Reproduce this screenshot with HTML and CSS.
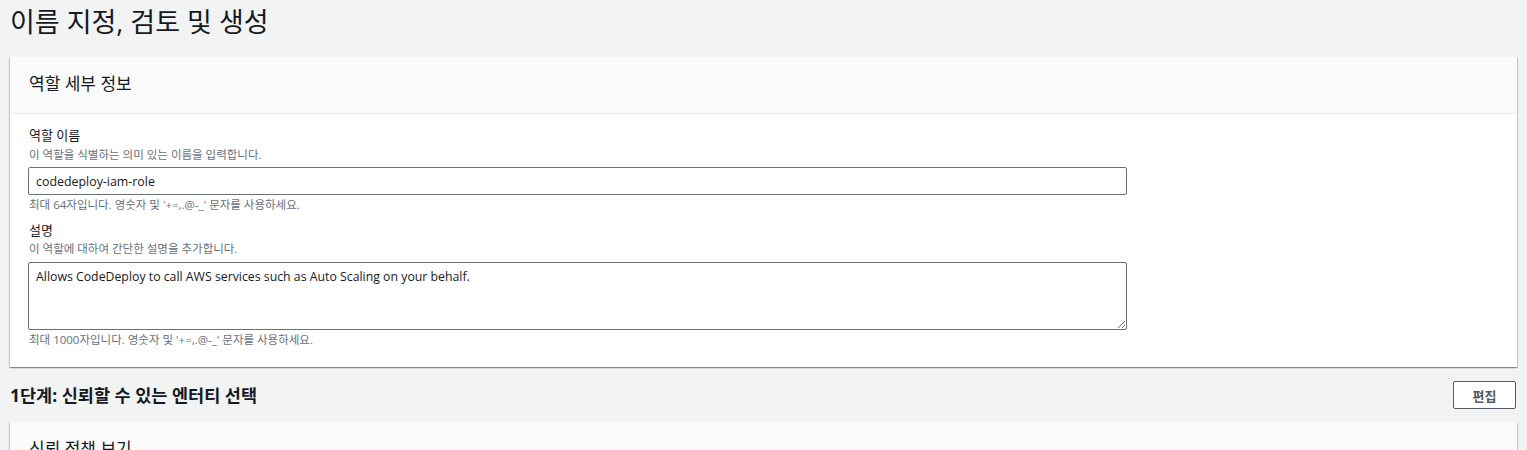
FILE: index.html
```html
<!DOCTYPE html>
<html lang="ko">
<head>
<meta charset="utf-8">
<title>이름 지정, 검토 및 생성</title>
<link rel="stylesheet" href="styles.css">
</head>
<body>
<div class="page">
  <h1 class="page-title">이름 지정, 검토 및 생성</h1>

  <section class="card">
    <div class="card-header">
      <h2 class="card-title">역할 세부 정보</h2>
    </div>
    <div class="card-body">
      <div class="field">
        <label class="field-label" for="role-name">역할 이름</label>
        <div class="field-desc">이 역할을 식별하는 의미 있는 이름을 입력합니다.</div>
        <input id="role-name" class="text-input" type="text" value="codedeploy-iam-role">
        <div class="field-hint">최대 64자입니다. 영숫자 및 '+=,.@-_' 문자를 사용하세요.</div>
      </div>
      <div class="field field-second">
        <label class="field-label" for="role-desc">설명</label>
        <div class="field-desc">이 역할에 대하여 간단한 설명을 추가합니다.</div>
        <textarea id="role-desc" class="text-area">Allows CodeDeploy to call AWS services such as Auto Scaling on your behalf.</textarea>
        <div class="field-hint">최대 1000자입니다. 영숫자 및 '+=,.@-_' 문자를 사용하세요.</div>
      </div>
    </div>
  </section>

  <div class="step-row">
    <h2 class="step-title">1단계: 신뢰할 수 있는 엔터티 선택</h2>
    <button class="btn" type="button">편집</button>
  </div>

  <section class="card">
    <div class="card-header">
      <h2 class="card-title">신뢰 정책 보기</h2>
    </div>
  </section>
</div>
</body>
</html>
```

FILE: styles.css
```css
html, body {
  margin: 0;
  padding: 0;
  background: #f2f3f3;
  height: 450px;
  overflow: hidden;
}

body {
  font-family: "Open Sans", "Noto Sans CJK KR", sans-serif;
  color: #16191f;
  font-size: 12.6px;
}

.page {
  padding: 5px 10px 0 10px;
}

.page-title {
  margin: 0;
  font-size: 27px;
  line-height: 34px;
  font-weight: 400;
  color: #16191f;
}

.card {
  margin-top: 18px;
  background: #ffffff;
  box-shadow: 0 1px 1px 0 rgba(0, 28, 36, 0.3),
              1px 1px 1px 0 rgba(0, 28, 36, 0.15),
              -1px 1px 1px 0 rgba(0, 28, 36, 0.15);
}

.card-header {
  background: #fafafa;
  padding: 17px 19px 19px 19px;
  border-bottom: 1px solid #eaeded;
}

.card-title {
  margin: 0;
  font-size: 17px;
  line-height: 20px;
  font-weight: 400;
  color: #16191f;
}

.card-body {
  padding: 11px 18px 19px 18px;
}

.field {
  display: flex;
  flex-direction: column;
  align-items: flex-start;
}

.field-second {
  margin-top: 7px;
}

.field-label {
  font-size: 13px;
  line-height: 20px;
  color: #16191f;
  padding-left: 1px;
}

.field-desc {
  margin-top: 2px;
  font-size: 11.5px;
  line-height: 16px;
  color: #687078;
  padding-left: 1px;
}

.field-second .field-desc {
  margin-top: 1px;
}

.text-input {
  box-sizing: border-box;
  margin: 4px 0 0 0;
  width: 1099px;
  height: 28px;
  padding: 0 7px;
  border: 1px solid #687078;
  border-radius: 2px;
  background: #ffffff;
  font-family: "Open Sans", "Noto Sans CJK KR", sans-serif;
  font-size: 12.4px;
  color: #16191f;
  outline: none;
}

.text-area {
  box-sizing: border-box;
  margin: 5px 0 0 0;
  width: 1099px;
  height: 68px;
  padding: 5px 7px;
  border: 1px solid #687078;
  border-radius: 2px;
  background: #ffffff;
  font-family: "Open Sans", "Noto Sans CJK KR", sans-serif;
  font-size: 12.3px;
  line-height: 18px;
  color: #16191f;
  outline: none;
  resize: both;
}

.field-hint {
  margin-top: 2px;
  font-size: 11.5px;
  line-height: 16px;
  color: #687078;
  padding-left: 1px;
}

.step-row {
  margin-top: 14px;
  display: flex;
  align-items: center;
  justify-content: space-between;
  padding-right: 1px;
}

.step-title {
  margin: 0;
  font-size: 17.5px;
  line-height: 20px;
  font-weight: 700;
  color: #16191f;
}

.step-row + .card {
  margin-top: 13px;
}

.btn {
  box-sizing: border-box;
  width: 63px;
  height: 28px;
  border: 1px solid #545b64;
  border-radius: 2px;
  background: #ffffff;
  color: #545b64;
  font-family: "Open Sans", "Noto Sans CJK KR", sans-serif;
  font-size: 13px;
  font-weight: 600;
  padding: 0;
  cursor: pointer;
}
```
